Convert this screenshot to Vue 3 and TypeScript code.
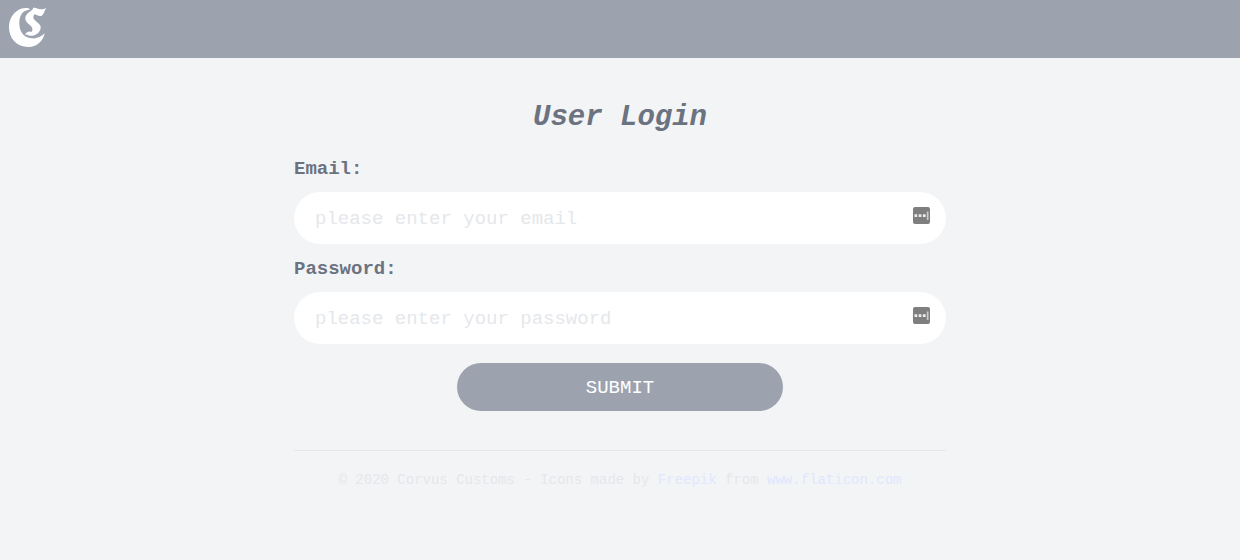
<script setup lang="ts">
import { reactive } from 'vue'

interface Field {
  id: 'email' | 'password'
  label: string
  placeholder: string
}

const fields: Field[] = [
  { id: 'email', label: 'Email:', placeholder: 'please enter your email' },
  { id: 'password', label: 'Password:', placeholder: 'please enter your password' },
]

const form = reactive({ email: '', password: '' })
</script>

<template>
  <div class="page">
    <header class="bar">
      <a class="home" href="#" aria-label="Corvus Customs">
        <svg class="logo" viewBox="0 0 120 126" aria-hidden="true">
          <path
            d="M67 7C58 1 43 2 30 10C13 20 3 39 3 61C3 95 26 120 61 120C87 120 105 103 110 79C98 91 84 96 70 94C47 91 35 75 34 51C33 32 40 17 51 12C57 9 62 10 67 7Z"
          />
          <path
            d="M115 3C106 8 98 8 90 5C83 2 78 1 75 3C76 8 70 10 64 15C56 21 51 27 52 36C53 45 61 50 68 56C75 63 75 70 70 75C64 71 56 75 51 83C58 80 62 88 74 86C89 83 99 71 98 59C96 49 83 44 77 35C75 30 76 25 80 22C87 24 93 29 101 26C109 22 108 11 115 3Z"
          />
        </svg>
      </a>
    </header>

    <main class="content">
      <h1 class="title">User Login</h1>
      <form @submit.prevent>
        <div v-for="field in fields" :key="field.id" class="field">
          <label class="label" :for="field.id">{{ field.label }}</label>
          <div class="control">
            <input
              :id="field.id"
              v-model="form[field.id]"
              class="input"
              :type="field.id"
              :placeholder="field.placeholder"
            />
            <svg class="key" viewBox="0 0 17 17" aria-hidden="true">
              <rect width="17" height="17" rx="2" fill="#7f7f7f" />
              <path d="M1.5 7.2h2.7v2.7H1.5zM5.7 7.2h2.7v2.7H5.7zM9.9 7.2h2.7v2.7H9.9z" fill="#eee" />
              <path d="M13.8 4.5h1.7v8.4H13.8z" fill="#ccc" />
            </svg>
          </div>
        </div>
        <button class="submit" type="submit">SUBMIT</button>
      </form>
      <footer class="footer">
        © 2020 Corvus Customs - Icons made by <a href="#">Freepik</a> from
        <a href="#">www.flaticon.com</a>
      </footer>
    </main>
  </div>
</template>

<style>
body {
  margin: 0;
  background: #f3f4f6;
}
</style>

<style scoped>
.page {
  min-height: 100vh;
  background: #f3f4f6;
  color: #6b7280;
  font-family: "Liberation Mono", monospace;
  font-size: 19px;
  line-height: 24px;
}

.bar {
  display: flex;
  align-items: center;
  padding: 7px 8px 9px;
  background: #9ca3af;
}

.home {
  display: flex;
}

.logo {
  width: 40px;
  height: 42px;
  fill: #fff;
}

.content {
  box-sizing: border-box;
  max-width: 652px;
  margin: 0 auto;
  padding: 42px 0;
}

.title {
  margin: 0 0 8px;
  font-size: 29px;
  font-style: italic;
  font-weight: 700;
  line-height: 36px;
  text-align: center;
}

.label {
  display: block;
  padding: 13px 0 11px;
  font-weight: 700;
}

.control {
  position: relative;
}

.input {
  display: block;
  box-sizing: border-box;
  width: 100%;
  height: 52px;
  padding: 2px 48px 0 21px;
  border: 0;
  border-radius: 26px;
  background: #fff;
  color: #6b7280;
  font: inherit;
}

.input::placeholder {
  color: #e5e7eb;
  opacity: 1;
}

.key {
  position: absolute;
  top: 15px;
  right: 16px;
  width: 17px;
  height: 17px;
}

.submit {
  display: block;
  width: 50%;
  height: 48px;
  margin: 19px auto 0;
  padding: 2px 0 0;
  border: 0;
  border-radius: 24px;
  background: #9ca3af;
  color: #fff;
  font: inherit;
  cursor: pointer;
}

.footer {
  margin-top: 39px;
  padding-top: 17px;
  border-top: 1px solid #e5e7eb;
  color: #e5e7eb;
  font-size: 14px;
  text-align: center;
}

.footer a {
  color: #e0e7ff;
  text-decoration: none;
}
</style>
